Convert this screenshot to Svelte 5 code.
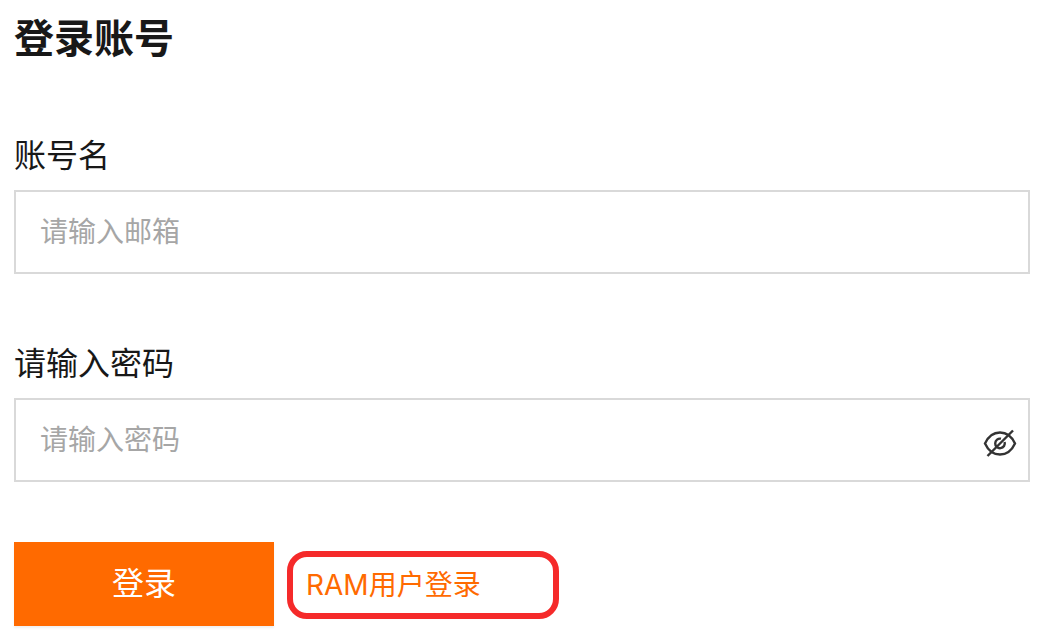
<script>
  let account = $state('');
  let password = $state('');
  let visible = $state(false);
</script>

<main>
  <h1>登录账号</h1>
  <form onsubmit={(e) => e.preventDefault()}>
    <div class="field">
      <label for="account">账号名</label>
      <div class="box">
        <input id="account" type="email" placeholder="请输入邮箱" bind:value={account} />
      </div>
    </div>
    <div class="field">
      <label for="password">请输入密码</label>
      <div class="box">
        <input id="password" type={visible ? 'text' : 'password'} placeholder="请输入密码" bind:value={password} />
        <button class="toggle" type="button" aria-label="显示密码" aria-pressed={visible} onclick={() => (visible = !visible)}>
          <svg width="36" height="32" viewBox="0 0 36 32" fill="none" stroke="#333" stroke-width="2.4">
            <path d="M3 16.500C6 10 11 5.500 18 5.500s12 4.500 15 11c-3 6.500-8 11-15 11S6 23 3 16.500Z" />
            <path d="M19 11.700A4.800 4.800 0 1 0 22.600 15" />
            <path d="M5.500 29 31 3.500" />
          </svg>
        </button>
      </div>
    </div>
    <div class="actions">
      <button class="submit" type="submit">登录</button>
      <a class="ram" href="#ram">RAM用户登录</a>
    </div>
  </form>
</main>

<style>
  :global(body) {
    margin: 0;
    background: #fff;
  }
  main {
    padding: 9px 8px 18px 14px;
    color: #181818;
    font-family: "Liberation Sans", "Noto Sans CJK SC", sans-serif;
  }
  h1 {
    margin: 0 0 63px;
    font-size: 40px;
    line-height: 60px;
    font-weight: 700;
  }
  .field {
    display: flex;
    flex-direction: column;
    gap: 10px;
    margin-bottom: 66px;
  }
  .field + .field {
    margin-bottom: 60px;
  }
  label {
    font-size: 32px;
    line-height: 48px;
  }
  .box {
    display: flex;
    align-items: center;
    box-sizing: border-box;
    border: 2px solid #d9d9d9;
    padding: 20px 10px 18px 0;
  }
  input {
    flex: 1;
    min-width: 0;
    height: 42px;
    padding: 0 24px;
    border: 0;
    outline: 0;
    background: none;
    color: inherit;
    font: 28px/42px "Liberation Sans", "Noto Sans CJK SC", sans-serif;
  }
  input::placeholder {
    color: #a6a6a6;
    opacity: 1;
  }
  .toggle {
    display: flex;
    padding: 4px 0 0;
    border: 0;
    background: none;
    cursor: pointer;
  }
  .actions {
    display: flex;
    align-items: flex-start;
    gap: 13px;
  }
  .submit {
    width: 260px;
    height: 84px;
    border: 0;
    background: #ff6a00;
    box-shadow: 0 2px 2px rgba(0, 0, 0, 0.06);
    color: #fff;
    font: 32px/48px "Liberation Sans", "Noto Sans CJK SC", sans-serif;
    cursor: pointer;
  }
  .ram {
    box-sizing: border-box;
    width: 272px;
    margin-top: 9px;
    padding: 8px 13px;
    border: 6px solid #f52a2a;
    border-radius: 20px;
    color: #ff6a00;
    font-family: Inter, "Noto Sans CJK SC", sans-serif;
    font-size: 28px;
    line-height: 40px;
    text-decoration: none;
  }
</style>
